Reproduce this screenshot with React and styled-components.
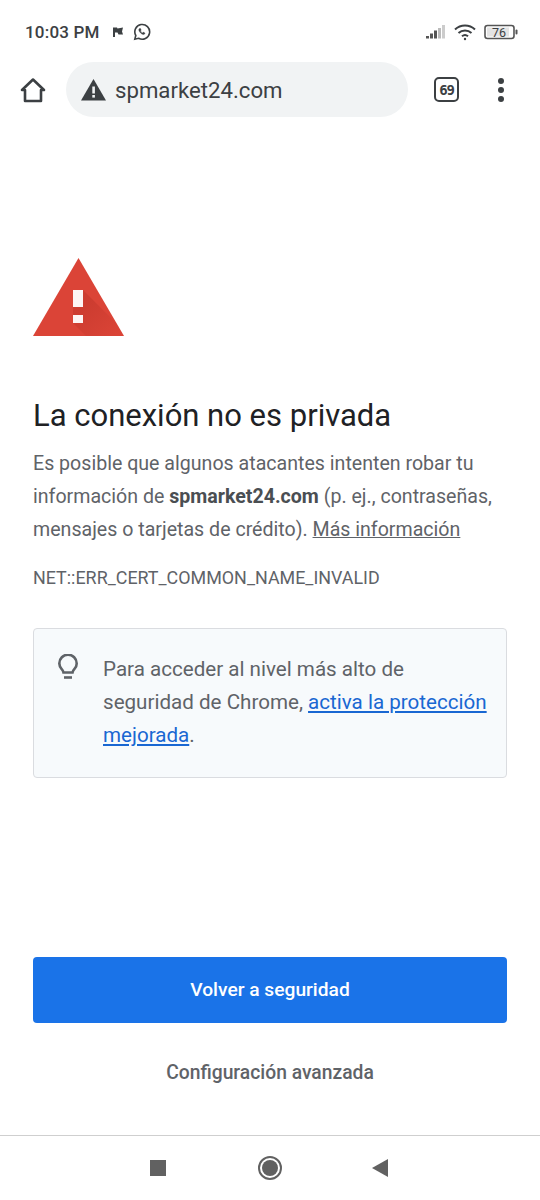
import React from "react";
import styled, { createGlobalStyle } from "styled-components";

const Global = createGlobalStyle`
  html, body { margin: 0; padding: 0; background: #fff; }
  body { font-family: Roboto, "Liberation Sans", sans-serif; }
`;
const Page = styled.div`
  width: 540px; height: 1200px; display: flex; flex-direction: column; overflow: hidden; background: #fff;
`;
const StatusBar = styled.div`
  height: 62px; flex: none; display: flex; align-items: center; justify-content: space-between;
  padding: 2px 22px 0 25px; box-sizing: border-box; color: #3c4043;
`;
const StatusGroup = styled.div`
  display: flex; align-items: center; gap: ${p => p.$gap || 8}px;
`;
const Clock = styled.span`
  font-size: 17px; font-weight: 500; letter-spacing: 0.2px; margin-right: 3px;
`;
const Toolbar = styled.div`
  height: 55px; flex: none; display: flex; align-items: center; padding: 0 20px;
`;
const HomeButton = styled.div`
  width: 26px; height: 26px; display: flex; margin-right: 20px;
`;
const Omnibox = styled.div`
  width: 342px; height: 55px; border-radius: 28px; background: #f1f3f4; display: flex; align-items: center;
  box-sizing: border-box; padding-left: 15px; gap: 9px; font-size: 22.2px; color: #3c4043; flex: none;
`;
const UrlText = styled.span`
  padding-top: 1px;
`;
const TabCounter = styled.div`
  width: 25px; height: 25px; box-sizing: border-box; border: 2.5px solid #3c4043; border-radius: 5px; margin-left: 26px; flex: none;
  display: flex; align-items: center; justify-content: center; font-size: 14px; font-weight: 700; color: #3c4043;
  font-family: "DejaVu Sans Mono", monospace; letter-spacing: -1.2px;
`;
const MenuDots = styled.div`
  display: flex; flex-direction: column; gap: 3px; margin-left: 39px;
`;
const Dot = styled.span`
  width: 6px; height: 6px; border-radius: 50%; background: #3c4043; display: block;
`;
const Content = styled.main`
  flex: 1; display: flex; flex-direction: column; padding: 141px 33px 0;
`;
const WarningIcon = styled.svg`
  width: 91px; height: 79px; display: block; flex: none;
`;
const Heading = styled.h1`
  margin: 59px 0 0; font-size: 31px; line-height: 40px; font-weight: 400; color: #202124;
`;
const Paragraph = styled.p`
  margin: 11px 0 0; font-size: 19.6px; line-height: 33px; color: #5f6368;
  b { font-weight: 700; color: #4a4e52; }
`;
const MoreLink = styled.span`
  text-decoration: underline; color: #5f6368;
`;
const ErrorCode = styled.div`
  margin-top: 20px; font-size: 17.9px; line-height: 24px; color: #5f6368;
`;
const InfoBox = styled.div`
  margin-top: 38px; height: 150px; box-sizing: border-box; border: 1px solid #dadce0; border-radius: 4px;
  background: #f7fafc; display: flex; padding: 24px 18px 0 22px; gap: 23px;
`;
const BulbIcon = styled.svg`
  width: 24px; height: 30px; flex: none; margin-top: 1px;
`;
const InfoText = styled.div`
  font-size: 20.6px; line-height: 33px; color: #5f6368;
`;
const BlueLink = styled.span`
  color: #1967d2; text-decoration: underline;
`;
const PrimaryButton = styled.button`
  margin-top: 179px; height: 66px; flex: none; border: 0; border-radius: 4px; background: #1a73e8; color: #fff;
  font: 500 19.2px Roboto, sans-serif; padding: 0 0 2px;
`;
const SecondaryAction = styled.div`
  margin-top: 37px; text-align: center; font-size: 19.3px; font-weight: 500; line-height: 26px; color: #5f6368;
`;
const NavBar = styled.nav`
  height: 65px; flex: none; border-top: 1.5px solid #cfcfcf; box-sizing: border-box; display: flex; align-items: center;
  justify-content: center; padding-bottom: 1px;
`;
const NavSlot = styled.div`
  width: 112px; display: flex; justify-content: center;
`;
const NavSquare = styled.div`
  width: 16px; height: 16px; background: #616161;
`;
const NavCircle = styled.div`
  width: 24px; height: 24px; box-sizing: border-box; border: 2px solid #616161; border-radius: 50%; padding: 2px;
  &::after { content: ""; display: block; width: 16px; height: 16px; border-radius: 50%; background: #616161; }
`;
const NavBack = styled.div`
  width: 0; height: 0; margin-right: 4px; border-style: solid; border-width: 9.5px 16px 9.5px 0;
  border-color: transparent #616161 transparent transparent;
`;

export default function App() {
  return (
    <Page>
      <Global />
      <StatusBar>
        <StatusGroup $gap={9}>
          <Clock>10:03 PM</Clock>
          <svg width="12" height="12" viewBox="0 0 12 12"><path d="M1 1.500h4l.5 1L11 1.500 10 5.500l1 3H6.500L5.500 6.500H3V11H1z" fill="#3c4043" /></svg>
          <svg width="18" height="18" viewBox="0 0 18 18" fill="none" stroke="#3c4043" strokeWidth="1.6">
            <path d="M1.800 16.200l1-3.700A7.400 7.400 0 1 1 5.600 15.300z" />
            <path d="M6.400 5.600c-.9.800-.8 2 .4 3.500s2.600 2.500 3.900 2.300c.8-.1 1.300-.7 1.200-1.400l-1.600-.9-.8.800c-.8-.3-1.600-1-2-2l.7-.8-.7-1.600z" fill="#3c4043" strokeWidth="0.4" />
          </svg>
        </StatusGroup>
        <StatusGroup $gap={7}>
          <svg width="21" height="16" viewBox="0 0 21 16">
            <rect x="0" y="12" width="3" height="2.500" fill="#555" />
            <rect x="4" y="9.500" width="3" height="5" fill="#555" />
            <rect x="8" y="6.500" width="3" height="8" fill="#555" />
            <rect x="12" y="4" width="3" height="10.500" fill="#bbb" />
            <rect x="16" y="1" width="3" height="13.500" fill="#ccc" />
          </svg>
          <svg width="23" height="17" viewBox="0 0 23 17" fill="none" stroke="#3c4043" strokeWidth="2">
            <path d="M1 5.500a14.500 14.500 0 0 1 20 0" />
            <path d="M4.500 9a9.500 9.500 0 0 1 13 0" />
            <path d="M8 12.300a4.600 4.600 0 0 1 6 0" />
            <circle cx="11" cy="15" r="1.200" fill="#3c4043" stroke="none" />
          </svg>
          <svg width="34" height="16" viewBox="0 0 34 16" fill="none">
            <rect x="1" y="1.500" width="29" height="13" rx="2.500" stroke="#555" strokeWidth="1.600" />
            <rect x="3" y="3.500" width="22" height="9" fill="#e4e4e4" />
            <rect x="31.500" y="5.500" width="2" height="5" rx="1" fill="#555" />
            <text x="15" y="12.600" textAnchor="middle" fontFamily="Roboto" fontSize="12.500" fill="#3c4043">76</text>
          </svg>
        </StatusGroup>
      </StatusBar>
      <Toolbar>
        <HomeButton>
          <svg width="26" height="26" viewBox="0 0 26 26" fill="none" stroke="#3c4043" strokeWidth="2.600" strokeLinejoin="round">
            <path d="M2 13L13 2.500 24 13h-3v11H5V13z" />
          </svg>
        </HomeButton>
        <Omnibox>
          <svg width="25" height="22" viewBox="0 0 25 22"><path d="M12.500 0L25 21.500H0z" fill="#3c4043" /><rect x="11.300" y="7.500" width="2.600" height="7" fill="#f1f3f4" /><rect x="11.300" y="16" width="2.600" height="2.600" fill="#f1f3f4" /></svg>
          <UrlText>spmarket24.com</UrlText>
        </Omnibox>
        <TabCounter>69</TabCounter>
        <MenuDots><Dot /><Dot /><Dot /></MenuDots>
      </Toolbar>
      <Content>
        <WarningIcon viewBox="0 0 91 79">
          <defs>
            <linearGradient id="warnShade" x1="0.300" y1="0.300" x2="0.900" y2="0.900">
              <stop offset="0" stopColor="#a8281e" stopOpacity="0.280" />
              <stop offset="1" stopColor="#a8281e" stopOpacity="0.020" />
            </linearGradient>
          </defs>
          <path d="M45.500 0L91 78H0z" fill="#db4437" />
          <path d="M50 32L84 66 91 78H53L40 65V32z" fill="url(#warnShade)" />
          <rect x="40" y="32" width="10" height="17" fill="#fff" fillOpacity="0.950" />
          <rect x="40" y="57" width="10" height="8" fill="#fff" fillOpacity="0.950" />
        </WarningIcon>
        <Heading>La conexión no es privada</Heading>
        <Paragraph>
          Es posible que algunos atacantes intenten robar tu información de <b>spmarket24.com</b> (p. ej., contraseñas, mensajes o tarjetas de crédito). <MoreLink>Más información</MoreLink>
        </Paragraph>
        <ErrorCode>NET::ERR_CERT_COMMON_NAME_INVALID</ErrorCode>
        <InfoBox>
          <BulbIcon viewBox="0 0 24 30" fill="none" stroke="#5f6368" strokeWidth="2.600">
            <path d="M7.500 18.500c-.2-1.600-1-2.600-2-3.700A8.600 8.600 0 0 1 3.300 9.400a8.700 8.700 0 0 1 17.400 0c0 2.100-.9 4-2.200 5.400-1 1.100-1.800 2.100-2 3.700z" />
            <path d="M8 23.500h8" />
          </BulbIcon>
          <InfoText>
            Para acceder al nivel más alto de seguridad de Chrome, <BlueLink>activa la protección mejorada</BlueLink>.
          </InfoText>
        </InfoBox>
        <PrimaryButton>Volver a seguridad</PrimaryButton>
        <SecondaryAction>Configuración avanzada</SecondaryAction>
      </Content>
      <NavBar>
        <NavSlot><NavSquare /></NavSlot>
        <NavSlot><NavCircle /></NavSlot>
        <NavSlot><NavBack /></NavSlot>
      </NavBar>
    </Page>
  );
}
